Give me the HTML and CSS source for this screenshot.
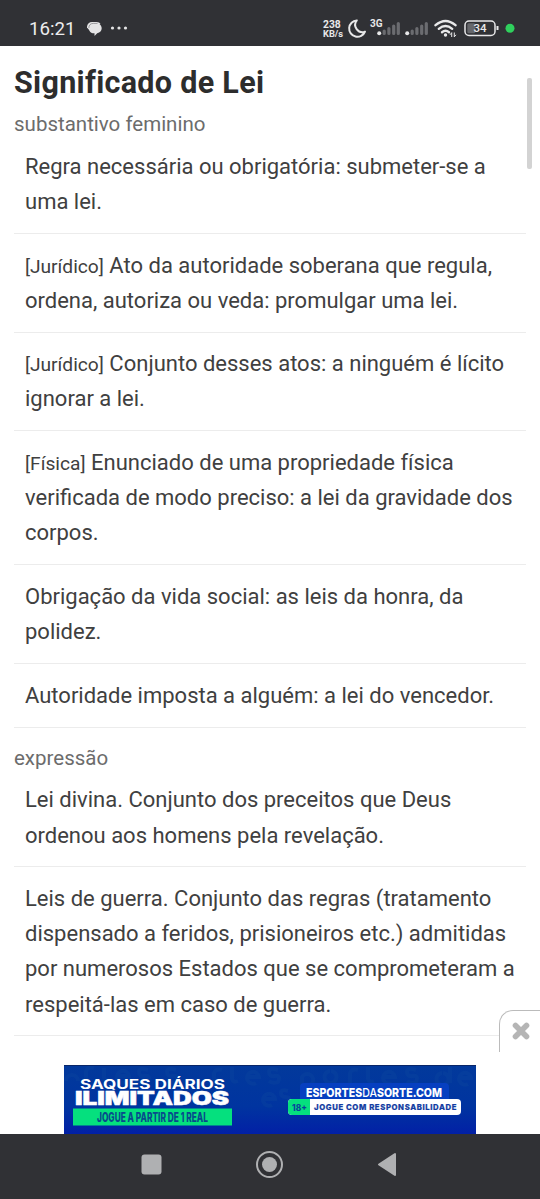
FILE: index.html
```html
<!DOCTYPE html>
<html lang="pt-BR">

<head>
    <meta charset="UTF-8">
    <meta name="viewport" content="width=device-width, initial-scale=1.0">
    <title>Significado de Lei</title>
    <link rel="stylesheet" href="styles.css">
</head>

<body>

    <header class="status-bar">
        <span class="clock">16:21</span>
        <svg class="status-left" width="44" height="18" viewBox="0 0 44 18">
            <path d="M2.500 9.500L0 6.500C-.3 3.500 2 1 5 1h4.500c2 0 3.300.9 4 2z" fill="#e4e4e5" />
            <path d="M6.800 2.500h2.900c3.100 0 5 2.200 5 4.700s-1.700 4.500-4.500 5L7.500 15v-2.800H6.800C4 12.200 2 10 2 7.400s2-4.900 4.800-4.900z" fill="#e4e4e5" />
            <path d="M1.800 7C1.800 4 3.600 2.400 6.500 2.400h4" fill="none" stroke="#66676b" stroke-width=".6" />
            <circle cx="25.500" cy="7" r="1.600" fill="#e4e4e5" />
            <circle cx="32" cy="7" r="1.600" fill="#e4e4e5" />
            <circle cx="38.500" cy="7" r="1.600" fill="#e4e4e5" />
        </svg>
        <svg class="status-right" width="200" height="24" viewBox="320 16 200 24">
            <g fill="#e8e8e9" font-family="Roboto, sans-serif" font-weight="700">
                <text x="323" y="27.500" font-size="10.300">238</text>
                <text x="323" y="37" font-size="9.300">KB/s</text>
                <text x="370" y="27" font-size="10">3G</text>
            </g>
            <path d="M356.800 20.400a8.200 8.200 0 1 0 8.200 11.200a7.200 7.200 0 0 1-8.200-11.200z" fill="none" stroke="#e8e8e9" stroke-width="2" stroke-linejoin="round" />
            <g stroke-width="3.200" stroke="#6b6c70" stroke-linecap="round">
                <path d="M384.200 33.500v-2.500M388.900 33.500v-5M393.700 33.500v-7.500M398.300 33.500v-10" />
                <path d="M412.200 33.500v-2.500M416.900 33.500v-5M421.700 33.500v-7.500M426.300 33.500v-10" />
            </g>
            <circle cx="379.200" cy="33.300" r="2" fill="#e8e8e9" />
            <circle cx="407.200" cy="33.300" r="2" fill="#e8e8e9" />
            <g fill="none" stroke="#e8e8e9" stroke-width="2.400" stroke-linecap="round">
                <path d="M435.500 25.200q10-8.400 20 0" />
                <path d="M438.800 28.800q6.700-5.600 13.400 0" />
                <path d="M442 32.200q3.500-2.800 7 0" />
            </g>
            <circle cx="445.500" cy="35" r="1.700" fill="#e8e8e9" />
            <path d="M451.700 32.500v4.500M454.300 32.500v4.500M450 34.800l1.700-2M456 34.800l-1.700 2" stroke="#e8e8e9" fill="none" />
            <rect x="465" y="21" width="30" height="14.500" rx="4" fill="none" stroke="#e8e8e9" stroke-width="1.500" />
            <rect x="467.300" y="23.200" width="8" height="10" rx="1.500" fill="#66676b" />
            <path d="M497.500 26v4" stroke="#e8e8e9" stroke-width="2" />
            <text x="480" y="32.300" text-anchor="middle" fill="#e8e8e9" font-family="Roboto, sans-serif" font-size="11.500" font-weight="500">34</text>
            <circle cx="510" cy="28.300" r="4.500" fill="#2fd05d" />
        </svg>
    </header>

    <main class="content">
        <h1>Significado de Lei</h1>
        <p class="word-class">substantivo feminino</p>
        <ul class="meanings">
            <li>Regra necessária ou obrigatória: submeter-se a uma lei.</li>
            <li><span class="tag">[Jurídico]</span> Ato da autoridade soberana que regula, ordena, autoriza ou veda: promulgar uma lei.</li>
            <li><span class="tag">[Jurídico]</span> Conjunto desses atos: a ninguém é lícito ignorar a lei.</li>
            <li><span class="tag">[Física]</span> Enunciado de uma propriedade física verificada de modo preciso: a lei da gravidade dos corpos.</li>
            <li>Obrigação da vida social: as leis da honra, da polidez.</li>
            <li>Autoridade imposta a alguém: a lei do vencedor.</li>
        </ul>
        <p class="word-class expression">expressão</p>
        <ul class="meanings">
            <li>Lei divina. Conjunto dos preceitos que Deus ordenou aos homens pela revelação.</li>
            <li>Leis de guerra. Conjunto das regras (tratamento dispensado a feridos, prisioneiros etc.) admitidas por numerosos Estados que se comprometeram a respeitá-las em caso de guerra.</li>
        </ul>
    </main>

    <div class="scrollbar"></div>

    <div class="ad-close">
        <svg width="20" height="20" viewBox="0 0 20 20">
            <path d="M3.500 3.500l11 11M14.500 3.500l-11 11" stroke="#b5b5b5" stroke-width="5.600" stroke-linecap="round" />
        </svg>
    </div>

    <footer class="bottom">
        <div class="ad">
            <svg width="412" height="69" viewBox="0 0 412 69">
                <defs>
                    <linearGradient id="blue" x1="0" y1="0" x2="0" y2="1">
                        <stop offset="0" stop-color="#02399b" />
                        <stop offset=".6" stop-color="#0034a0" />
                        <stop offset="1" stop-color="#0220a6" />
                    </linearGradient>
                </defs>
                <rect width="412" height="69" fill="url(#blue)" />
                <!-- faint swirls behind the offer -->
                <g fill="none" stroke="#0b459f" stroke-width="4" opacity=".4">
                    <path d="M2 16a6 6 0 1 1 12 0M22 16v-10q2-5 8-3M40 3v10q1 4 6 2M54 11h11a6 6 0 1 0-3 6M84 5q-9-3-9 2t6 4 3 6q-5 2-9-1M112 5q-9-3-9 2t6 4 3 6q-5 2-9-1" />
                    <path d="M150 20v-12q2-5 8-3M168 2v12q1 4 6 2M184 12h11a6 6 0 1 0-3 6M214 5q-9-3-9 2t6 4 3 6q-5 2-9-1M200 34h11a6 6 0 1 0-3 6M224 26q-7-2-7 2t5 4 2 5" />
                    <path d="M238 22v-10a6 6 0 1 1 2 8M266 6a6 6 0 1 0 1 0M286 18v-10q2-5 8-3M304 2v12q1 4 6 2M320 12h11a6 6 0 1 0-3 6M352 5q-9-3-9 2t6 4 3 6q-5 2-9-1M378 8a6 6 0 1 0 1 0M386 2v16M396 13h11a6 6 0 1 0-3 6" />
                </g>
                <path d="M0 .5h412" stroke="#092668" />
                <g font-family="Inter, sans-serif" font-weight="800">
                    <text x="16" y="24" font-size="13" font-weight="700" fill="#fff" textLength="145" lengthAdjust="spacingAndGlyphs">SAQUES DIÁRIOS</text>
                    <text x="11" y="39.500" font-size="18.500" font-weight="900" fill="#fff" stroke="#fff" stroke-width=".5" textLength="154" lengthAdjust="spacingAndGlyphs">ILIMITADOS</text>
                    <rect x="9" y="43.500" width="159" height="17" fill="#05e07e" />
                    <text x="33" y="56.500" font-size="13" fill="#084b8c" textLength="111" lengthAdjust="spacingAndGlyphs">JOGUE A PARTIR DE 1 REAL</text>
                    <rect x="236" y="18" width="149" height="19" rx="4" fill="#063fc0" />
                    <text x="242" y="31.500" font-size="12" fill="#fff" textLength="136" lengthAdjust="spacingAndGlyphs">ESPORTES<tspan font-weight="500">DA</tspan>SORTE.COM</text>
                    <rect x="224" y="34" width="173" height="16" rx="4" fill="#fff" />
                    <path d="M228 34h18v16h-18a4 4 0 0 1-4-4v-8a4 4 0 0 1 4-4z" fill="#05e07e" />
                    <text x="228" y="45.500" font-size="8.500" fill="#08469b" textLength="15" lengthAdjust="spacingAndGlyphs">18+</text>
                    <text x="250" y="45.300" font-size="7.500" letter-spacing=".6" fill="#123ca2" stroke="#123ca2" stroke-width=".2" textLength="143" lengthAdjust="spacingAndGlyphs">JOGUE COM RESPONSABILIDADE</text>
                </g>
            </svg>
        </div>
        <nav class="nav-bar">
            <svg width="540" height="65" viewBox="0 0 540 65">
                <rect x="141.500" y="20.500" width="20" height="20" rx="3" fill="#afb0b2" />
                <circle cx="269.500" cy="30.500" r="12.500" fill="none" stroke="#afb0b2" stroke-width="2" />
                <circle cx="269.500" cy="30.500" r="7.500" fill="#afb0b2" />
                <path d="M379 30.500l16-10.500v21z" fill="#afb0b2" stroke="#afb0b2" stroke-width="2" stroke-linejoin="round" />
            </svg>
        </nav>
    </footer>

</body>

</html>
```
FILE: styles.css
```css
* {
    box-sizing: border-box;
}

body {
    font-family: Roboto, sans-serif;
    background-color: #fff;
    color: #404040;
    margin: 0;
    height: 1199px;
    display: flex;
    flex-direction: column;
    overflow: hidden;
}

svg {
    display: block;
}

.status-bar {
    display: flex;
    align-items: flex-start;
    height: 46px;
    padding: 16px 20px 0 29px;
    background-color: #303135;
    color: #ececed;
}

.clock {
    width: 58px;
    font-size: 18.7px;
    font-weight: 400;
    line-height: 26px;
}

.status-left {
    margin-top: 5px;
}

.status-right {
    margin-left: auto;
}

.content {
    flex: 1;
    padding: 17px 14px 0;
}

h1 {
    margin: 0;
    font-size: 30.5px;
    font-weight: 700;
    line-height: 40px;
    letter-spacing: 0.3px;
    color: #2d2d2d;
}

.word-class {
    margin: 0;
    padding-top: 4px;
    height: 32px;
    font-size: 20.5px;
    line-height: 35px;
    color: #6c6c6c;
}

.expression {
    margin-top: 9px;
}

.meanings {
    list-style: none;
    margin: 0;
    padding: 0;
}

.meanings li {
    padding: 13.8px 0 13.8px 11px;
    border-bottom: 1px solid #ececec;
    font-size: 22px;
    line-height: 35.1px;
}

.tag {
    font-size: 19.2px;
    line-height: 1;
}

.scrollbar {
    position: absolute;
    top: 78px;
    left: 527px;
    width: 5px;
    height: 91px;
    border-radius: 2px;
    background-color: #d3d3d3;
}

/* close tab sits over the last divider */
.ad-close {
    position: absolute;
    top: 1010px;
    right: 0;
    width: 41px;
    height: 42px;
    padding: 11px 0 0 12px;
    background-color: #fff;
    border-top: 1px solid #bbb;
    border-left: 1px solid #bbb;
    border-top-left-radius: 14px;
}

.ad {
    padding-left: 64px;
}

.nav-bar {
    height: 65px;
    background-color: #303135;
}
```
